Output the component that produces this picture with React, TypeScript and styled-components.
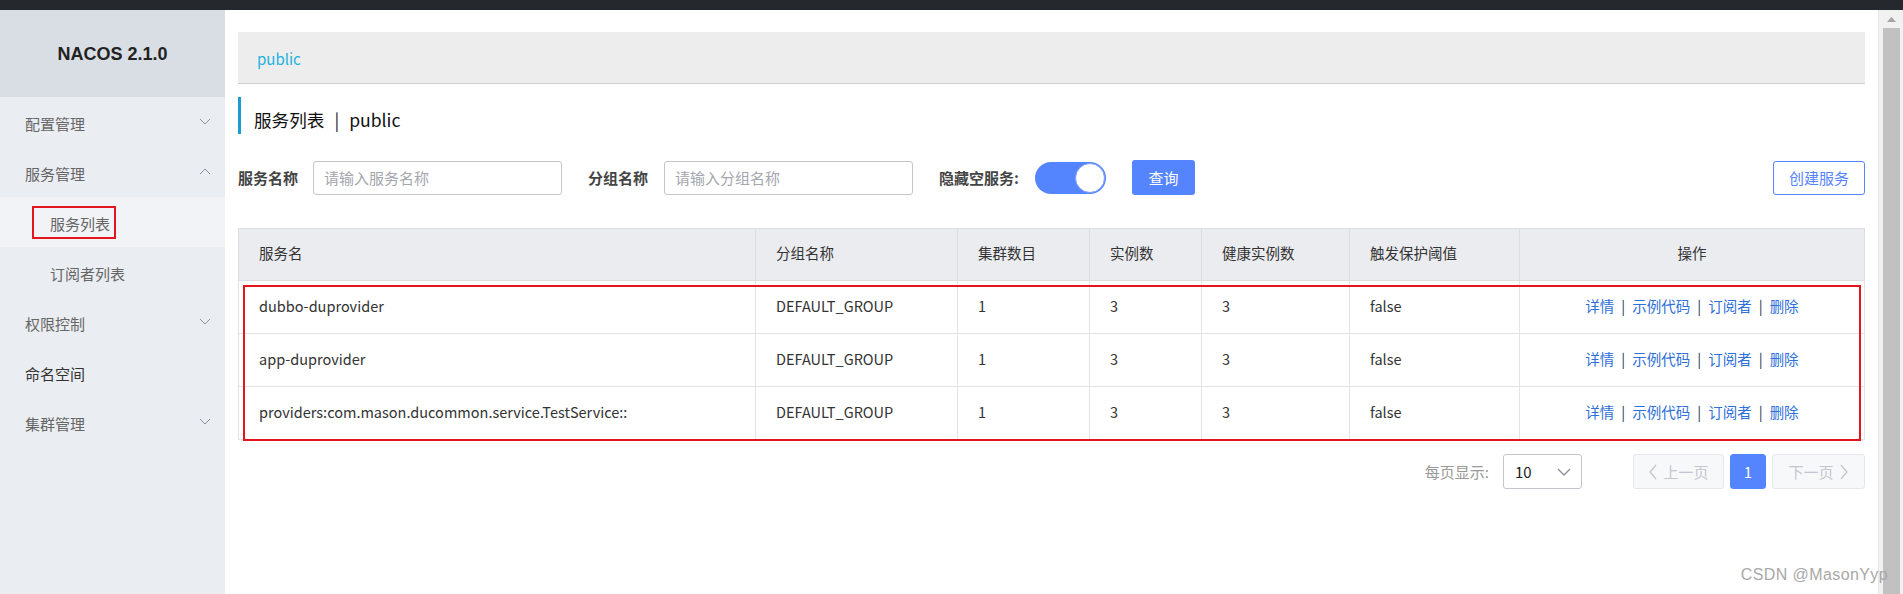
import React from "react";
import styled, { createGlobalStyle } from "styled-components";

const GlobalStyle = createGlobalStyle`
  html, body { margin: 0; padding: 0; background: #fff; }
  body { font-family: "Noto Sans CJK SC", "Noto Sans", sans-serif; color: #333; }
  * { box-sizing: border-box; }
`;

const Page = styled.div`
  position: relative;
  width: 1903px;
  height: 594px;
  overflow: hidden;
  display: flex;
  flex-direction: column;
`;

const TopBar = styled.div`
  height: 10px;
  background: #25282d;
  flex: none;
`;

const Body = styled.div`
  flex: 1;
  display: flex;
  min-height: 0;
`;

const Sidebar = styled.aside`
  width: 225px;
  flex: none;
  background: #eaedf1;
  display: flex;
  flex-direction: column;
`;

const Brand = styled.div`
  height: 87px;
  background: #d9dee4;
  display: flex;
  align-items: center;
  justify-content: center;
  font-family: "Liberation Sans", Arial, sans-serif;
  font-weight: 700;
  font-size: 18px;
  color: #222;
  padding-top: 2px;
`;

const Menu = styled.nav`
  display: flex;
  flex-direction: column;
`;

const MenuItem = styled.div<{ $strong?: boolean }>`
  position: relative;
  height: 50px;
  display: flex;
  align-items: center;
  justify-content: space-between;
  padding: 2px 14px 0 25px;
  font-size: 15px;
  color: ${(p) => (p.$strong ? "#333" : "#666")};
`;

const SubItem = styled.div<{ $active?: boolean }>`
  position: relative;
  height: 50px;
  display: flex;
  align-items: center;
  padding: 2px 0 0 50px;
  font-size: 15px;
  color: #666;
  background: ${(p) => (p.$active ? "#f2f3f6" : "transparent")};
`;

const SideMark = styled.span`
  position: absolute;
  left: 32px;
  top: 9px;
  width: 84px;
  height: 33px;
  border: 2px solid #e3161e;
  pointer-events: none;
`;

const Chevron = ({ up }: { up?: boolean }) => (
  <svg width="12" height="8" viewBox="0 0 12 8" style={{ marginTop: up ? -4 : -2 }}>
    <polyline
      points={up ? "1,7 6,2 11,7" : "1,1 6,6 11,1"}
      fill="none"
      stroke="#8a8f99"
      strokeWidth="1"
    />
  </svg>
);

const Main = styled.main`
  flex: 1;
  min-width: 0;
  background: #fff;
  padding: 22px 13px 0;
  display: flex;
  flex-direction: column;
`;

const Breadcrumb = styled.div`
  height: 52px;
  background: #ededed;
  border-bottom: 1px solid #cfcfcf;
  display: flex;
  align-items: center;
  padding: 2px 0 0 19px;
  font-size: 15px;
  color: #1fb1e0;
`;

const Title = styled.h1`
  margin: 13px 0 0;
  height: 37px;
  border-left: 3px solid #1a9bd2;
  padding: 8px 0 0 13px;
  display: flex;
  align-items: center;
  font-size: 17.6px;
  font-weight: 400;
  color: #111;
`;

const TitleSep = styled.span`
  margin: 0 10px;
  color: #222;
`;

const FilterRow = styled.div`
  margin-top: 26px;
  display: flex;
  align-items: center;
  height: 35px;
`;

const Label = styled.label<{ $gap?: number }>`
  font-size: 15px;
  font-weight: 700;
  color: #444;
  margin-right: ${(p) => p.$gap ?? 15}px;
  white-space: nowrap;
`;

const TextInput = styled.input`
  width: 249px;
  height: 34px;
  border: 1px solid #c4c6cf;
  border-radius: 3px;
  padding: 0 10px;
  font-family: inherit;
  font-size: 15px;
  color: #333;
  margin-right: 26px;
  outline: none;
  &::placeholder { color: #a4a6ad; }
`;

const Switch = styled.div`
  width: 71px;
  height: 32px;
  border-radius: 16px;
  background: #5584ff;
  display: flex;
  align-items: center;
  justify-content: flex-end;
  padding-right: 1px;
  margin-right: 26px;
`;

const Knob = styled.div`
  width: 30px;
  height: 30px;
  border-radius: 50%;
  background: #fff;
  border: 1px solid #7a9cff;
`;

const PrimaryButton = styled.button`
  width: 63px;
  height: 35px;
  border: none;
  border-radius: 3px;
  background: #5584ff;
  color: #fff;
  font-family: inherit;
  font-size: 15px;
  padding: 0;
`;

const OutlineButton = styled.button`
  margin-left: auto;
  width: 92px;
  height: 34px;
  border: 1px solid #5584ff;
  border-radius: 3px;
  background: #fff;
  color: #5584ff;
  font-family: inherit;
  font-size: 15px;
  padding: 0;
`;

const TableWrap = styled.div`
  position: relative;
  margin-top: 33px;
`;

const Table = styled.table`
  width: 100%;
  border-collapse: collapse;
  table-layout: fixed;
  border: 1px solid #dcdee3;
`;

const Th = styled.th<{ $center?: boolean }>`
  height: 52px;
  background: #ebecf0;
  border: 1px solid #dcdee3;
  padding: 0 20px 4px;
  font-size: 14.5px;
  font-weight: 400;
  color: #333;
  text-align: ${(p) => (p.$center ? "center" : "left")};
`;

const Td = styled.td<{ $center?: boolean }>`
  height: 53px;
  border: 1px solid #e1e3e8;
  padding: 0 20px 4px;
  font-size: 14.5px;
  color: #333;
  text-align: ${(p) => (p.$center ? "center" : "left")};
  white-space: nowrap;
`;

const Link = styled.a`
  color: #2f6fd9;
  text-decoration: none;
`;

const LinkSep = styled.span`
  color: #2a3550;
  margin: 0 7px;
`;

const RowMark = styled.div`
  position: absolute;
  left: 5px;
  top: 57px;
  right: 4px;
  bottom: -1px;
  border: 2px solid #e3161e;
  pointer-events: none;
`;

const Pager = styled.div`
  margin-top: 14px;
  display: flex;
  align-items: center;
  justify-content: flex-end;
  height: 35px;
`;

const PagerLabel = styled.span`
  font-size: 15px;
  color: #999;
  margin-right: 14px;
`;

const Select = styled.div`
  width: 79px;
  height: 35px;
  border: 1px solid #c4c6cf;
  border-radius: 3px;
  display: flex;
  align-items: center;
  justify-content: space-between;
  padding: 0 10px 0 11px;
  font-size: 15px;
  color: #222;
  margin-right: 51px;
`;

const PageBtn = styled.div<{ $w: number; $active?: boolean; $first?: boolean }>`
  width: ${(p) => p.$w}px;
  height: 35px;
  border-radius: 3px;
  display: flex;
  align-items: center;
  justify-content: center;
  gap: 6px;
  font-size: 15px;
  background: ${(p) => (p.$active ? "#5584ff" : "#f7f8fa")};
  border: 1px solid ${(p) => (p.$active ? "#5584ff" : "#e6e7eb")};
  color: ${(p) => (p.$active ? "#fff" : "#c4c6cf")};
  margin-left: ${(p) => (p.$first ? 0 : 6)}px;
`;

const Scrollbar = styled.div`
  width: 25px;
  flex: none;
  background: #f1f1f1;
  border-left: 1px solid #e8e8e8;
  display: flex;
  flex-direction: column;
  align-items: center;
`;

const ScrollArrow = styled.div`
  height: 18px;
  display: flex;
  align-items: center;
  justify-content: center;
`;

const ScrollThumb = styled.div`
  flex: 1;
  width: 17px;
  background: #c1c1c1;
`;

const Watermark = styled.div`
  position: absolute;
  right: 15px;
  bottom: 10px;
  font-family: "Liberation Sans", Arial, sans-serif;
  font-size: 16px;
  letter-spacing: 0.4px;
  color: #a8a8a8;
`;

const Arrow = ({ dir, color }: { dir: "l" | "r" | "d"; color: string }) => {
  const pts = dir === "l" ? "8,1 2,8 8,15" : dir === "r" ? "1,1 7,8 1,15" : "1,1 7,7 13,1";
  const w = dir === "d" ? 14 : 9;
  const h = dir === "d" ? 8 : 16;
  return (
    <svg width={w} height={h} viewBox={`0 0 ${w} ${h}`}>
      <polyline points={pts} fill="none" stroke={color} strokeWidth="1.3" />
    </svg>
  );
};

const rows = [
  "dubbo-duprovider",
  "app-duprovider",
  "providers:com.mason.ducommon.service.TestService::",
];

const cols = [517, 202, 132, 112, 148, 170, 345];

export default function App() {
  return (
    <Page>
      <GlobalStyle />
      <TopBar />
      <Body>
        <Sidebar>
          <Brand>NACOS 2.1.0</Brand>
          <Menu>
            <MenuItem>
              配置管理
              <Chevron />
            </MenuItem>
            <MenuItem>
              服务管理
              <Chevron up />
            </MenuItem>
            <SubItem $active>
              服务列表
              <SideMark />
            </SubItem>
            <SubItem>订阅者列表</SubItem>
            <MenuItem>
              权限控制
              <Chevron />
            </MenuItem>
            <MenuItem $strong>命名空间</MenuItem>
            <MenuItem>
              集群管理
              <Chevron />
            </MenuItem>
          </Menu>
        </Sidebar>
        <Main>
          <Breadcrumb>public</Breadcrumb>
          <Title>
            服务列表<TitleSep>|</TitleSep>public
          </Title>
          <FilterRow>
            <Label>服务名称</Label>
            <TextInput placeholder="请输入服务名称" />
            <Label $gap={16}>分组名称</Label>
            <TextInput placeholder="请输入分组名称" />
            <Label $gap={16}>隐藏空服务:</Label>
            <Switch>
              <Knob />
            </Switch>
            <PrimaryButton>查询</PrimaryButton>
            <OutlineButton>创建服务</OutlineButton>
          </FilterRow>
          <TableWrap>
            <Table>
              <colgroup>
                {cols.map((w, i) => (
                  <col key={i} style={{ width: w }} />
                ))}
              </colgroup>
              <thead>
                <tr>
                  <Th>服务名</Th>
                  <Th>分组名称</Th>
                  <Th>集群数目</Th>
                  <Th>实例数</Th>
                  <Th>健康实例数</Th>
                  <Th>触发保护阈值</Th>
                  <Th $center>操作</Th>
                </tr>
              </thead>
              <tbody>
                {rows.map((name) => (
                  <tr key={name}>
                    <Td>{name}</Td>
                    <Td>DEFAULT_GROUP</Td>
                    <Td>1</Td>
                    <Td>3</Td>
                    <Td>3</Td>
                    <Td>false</Td>
                    <Td $center>
                      <Link>详情</Link>
                      <LinkSep>|</LinkSep>
                      <Link>示例代码</Link>
                      <LinkSep>|</LinkSep>
                      <Link>订阅者</Link>
                      <LinkSep>|</LinkSep>
                      <Link>删除</Link>
                    </Td>
                  </tr>
                ))}
              </tbody>
            </Table>
            <RowMark />
          </TableWrap>
          <Pager>
            <PagerLabel>每页显示:</PagerLabel>
            <Select>
              10
              <Arrow dir="d" color="#8a8f99" />
            </Select>
            <PageBtn $w={91} $first>
              <Arrow dir="l" color="#c4c6cf" />
              上一页
            </PageBtn>
            <PageBtn $w={36} $active>
              1
            </PageBtn>
            <PageBtn $w={93}>
              下一页
              <Arrow dir="r" color="#c4c6cf" />
            </PageBtn>
          </Pager>
        </Main>
        <Scrollbar>
          <ScrollArrow>
            <svg width="9" height="5" viewBox="0 0 9 5">
              <polygon points="0,5 4.5,0 9,5" fill="#a3a3a3" />
            </svg>
          </ScrollArrow>
          <ScrollThumb />
        </Scrollbar>
      </Body>
      <Watermark>CSDN @MasonYyp</Watermark>
    </Page>
  );
}
